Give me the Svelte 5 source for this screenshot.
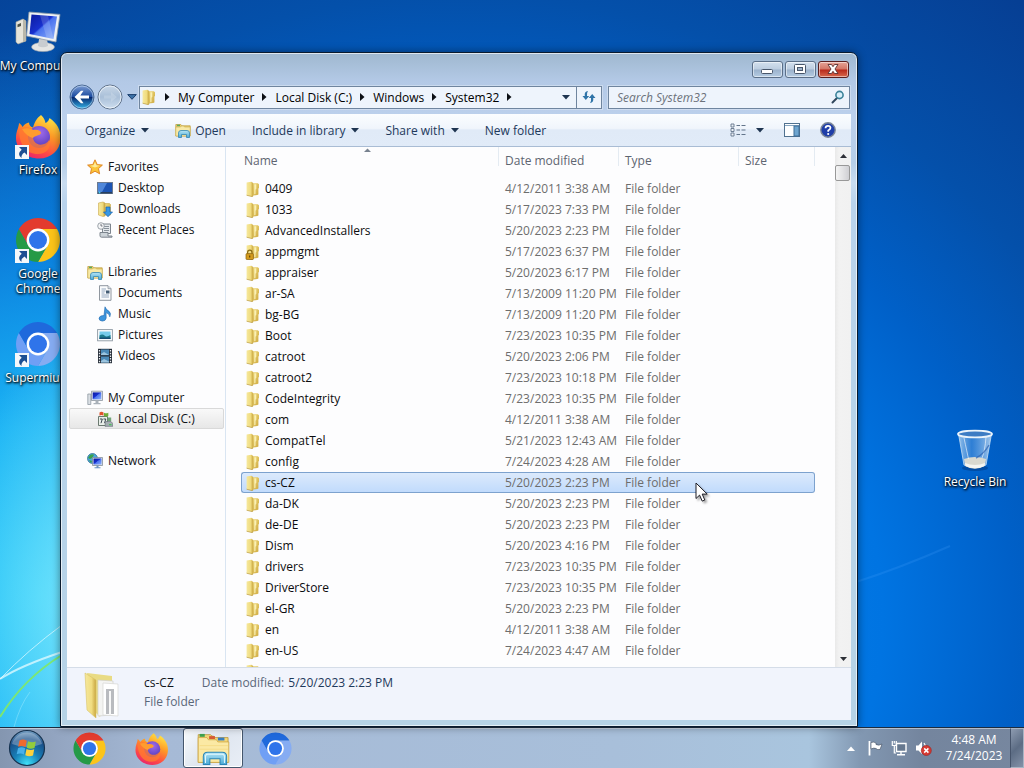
<script lang="ts">
  interface Entry {
    name: string;
    date: string;
    locked?: boolean;
  }

  const desktopItems = [
    { label: 'My Computer', icon: 'computer', shortcut: false },
    { label: 'Firefox', icon: 'firefox', shortcut: true },
    { label: 'Google Chrome', icon: 'chrome', shortcut: true },
    { label: 'Supermium', icon: 'supermium', shortcut: true },
  ];

  const crumbs = ['My Computer', 'Local Disk (C:)', 'Windows', 'System32'];

  const tree = [
    { label: 'Favorites', icon: 'star', children: [
      { label: 'Desktop', icon: 'desktop' },
      { label: 'Downloads', icon: 'downloads' },
      { label: 'Recent Places', icon: 'recent' },
    ] },
    { label: 'Libraries', icon: 'library', children: [
      { label: 'Documents', icon: 'document' },
      { label: 'Music', icon: 'music' },
      { label: 'Pictures', icon: 'picture' },
      { label: 'Videos', icon: 'video' },
    ] },
    { label: 'My Computer', icon: 'pc', children: [
      { label: 'Local Disk (C:)', icon: 'disk' },
    ] },
    { label: 'Network', icon: 'network', children: [] },
  ];

  const entries: Entry[] = [
    { name: '0409', date: '4/12/2011 3:38 AM' },
    { name: '1033', date: '5/17/2023 7:33 PM' },
    { name: 'AdvancedInstallers', date: '5/20/2023 2:23 PM' },
    { name: 'appmgmt', date: '5/17/2023 6:37 PM', locked: true },
    { name: 'appraiser', date: '5/20/2023 6:17 PM' },
    { name: 'ar-SA', date: '7/13/2009 11:20 PM' },
    { name: 'bg-BG', date: '7/13/2009 11:20 PM' },
    { name: 'Boot', date: '7/23/2023 10:35 PM' },
    { name: 'catroot', date: '5/20/2023 2:06 PM' },
    { name: 'catroot2', date: '7/23/2023 10:18 PM' },
    { name: 'CodeIntegrity', date: '7/23/2023 10:35 PM' },
    { name: 'com', date: '4/12/2011 3:38 AM' },
    { name: 'CompatTel', date: '5/21/2023 12:43 AM' },
    { name: 'config', date: '7/24/2023 4:28 AM' },
    { name: 'cs-CZ', date: '5/20/2023 2:23 PM' },
    { name: 'da-DK', date: '5/20/2023 2:23 PM' },
    { name: 'de-DE', date: '5/20/2023 2:23 PM' },
    { name: 'Dism', date: '5/20/2023 4:16 PM' },
    { name: 'drivers', date: '7/23/2023 10:35 PM' },
    { name: 'DriverStore', date: '7/23/2023 10:35 PM' },
    { name: 'el-GR', date: '5/20/2023 2:23 PM' },
    { name: 'en', date: '4/12/2011 3:38 AM' },
    { name: 'en-US', date: '7/24/2023 4:47 AM' },
  ];

  let selectedName = $state('cs-CZ');
  let activePlace = $state('Local Disk (C:)');
  let query = $state('');

  const selected = $derived(entries.find(e => e.name === selectedName) ?? entries[0]);
</script>

<!-- gradients shared by the icons -->
<svg class="defs" width="0" height="0" aria-hidden="true">
  <defs>
    <linearGradient id="gFold" x1="0" x2="1" y1="0" y2="0">
      <stop offset="0" stop-color="#f6e89c" /><stop offset=".6" stop-color="#f0dc80" /><stop offset="1" stop-color="#c9a640" />
    </linearGradient>
    <linearGradient id="gFoldR" x1="0" x2="1" y1="0" y2="1">
      <stop offset="0" stop-color="#f0db7c" /><stop offset="1" stop-color="#cda840" />
    </linearGradient>
    <linearGradient id="gGlass" x1="0" x2="0" y1="0" y2="1">
      <stop offset="0" stop-color="#b5e6f6" /><stop offset="1" stop-color="#4aa9d6" />
    </linearGradient>
    <linearGradient id="gScreen" x1="0" x2="1" y1="0" y2="1">
      <stop offset="0" stop-color="#0b1a9c" /><stop offset=".45" stop-color="#1830cf" /><stop offset=".5" stop-color="#4a72ee" /><stop offset="1" stop-color="#8fb2fb" />
    </linearGradient>
    <linearGradient id="gNav" x1="0" x2="0" y1="0" y2="1">
      <stop offset="0" stop-color="#7f9fd4" /><stop offset=".48" stop-color="#1d4ca0" /><stop offset=".52" stop-color="#06286f" /><stop offset="1" stop-color="#35b6ea" />
    </linearGradient>
    <linearGradient id="gNavOff" x1="0" x2="0" y1="0" y2="1">
      <stop offset="0" stop-color="#c9d8e8" /><stop offset=".5" stop-color="#a9bfd8" /><stop offset="1" stop-color="#cfdff0" />
    </linearGradient>
    <linearGradient id="gFire" x1=".8" x2=".3" y1="0" y2="1">
      <stop offset="0" stop-color="#fff04a" /><stop offset=".4" stop-color="#ff9a26" /><stop offset=".75" stop-color="#ff4a45" /><stop offset="1" stop-color="#e8246c" />
    </linearGradient>
    <radialGradient id="gGlobe" cx=".55" cy=".3" r=".8">
      <stop offset="0" stop-color="#a06bea" /><stop offset="1" stop-color="#4a35b4" />
    </radialGradient>
    <radialGradient id="gOrb" cx=".5" cy=".95" r=".95">
      <stop offset="0" stop-color="#3fe0f8" /><stop offset=".4" stop-color="#1780b8" /><stop offset=".75" stop-color="#19508a" /><stop offset="1" stop-color="#7ba4c6" />
    </radialGradient>
    <linearGradient id="gBin" x1="0" x2="1" y1="0" y2="0">
      <stop offset="0" stop-color="#bcd9f2" stop-opacity=".8" /><stop offset=".4" stop-color="#5c9ce0" stop-opacity=".5" /><stop offset="1" stop-color="#d8e9f8" stop-opacity=".75" />
    </linearGradient>
  </defs>
</svg>

{#snippet folder(locked: boolean)}
  <svg class="i16" viewBox="0 0 16 16" aria-hidden="true">
    <path d="M7.500 2.300h5.300l1.200 1V7l-.6.5V13.400l-1.200.6-4.700.6z" fill="url(#gFoldR)" />
    <path d="M9.300 3.300h2v4.500l-.8 1v4l-1.200.5z" fill="#faf0b4" />
    <path d="M1.600 1.600 6.400.8l1.800 1.200V15L7 15.600 1.600 14.200z" fill="url(#gFold)" />
    <path d="M1.600 14.200 7 15.600l1.200-.6" fill="none" stroke="#b8963a" stroke-width=".7" />
    {#if locked}
      <path d="M2.600 10V8.400a2.200 2.200 0 0 1 4.400 0V10" fill="none" stroke="#8a6a12" stroke-width="1.200" />
      <rect x="1" y="9.600" width="7.400" height="5.900" rx=".8" fill="#d39a1c" stroke="#8a6212" stroke-width=".7" />
      <path d="M4.700 11.400v2.200" stroke="#5e4208" stroke-width="1.200" />
    {/if}
  </svg>
{/snippet}

{#snippet browserWheel(a: string, b: string, c: string)}
  <path d="M4.950 13A22 22 0 0 1 43.050 13H24A11 11 0 0 0 14.470 29.500Z" fill={c} transform="rotate(120 24 24)" />
  <path d="M4.950 13A22 22 0 0 1 43.050 13H24A11 11 0 0 0 14.470 29.500Z" fill={b} transform="rotate(240 24 24)" />
  <path d="M4.950 13A22 22 0 0 1 43.050 13H24A11 11 0 0 0 14.470 29.500Z" fill={a} />
  <circle cx="24" cy="24" r="11.400" fill="#fff" />
  <circle cx="24" cy="24" r="9" fill="#2f74ea" />
{/snippet}

{#snippet bigIcon(name: string)}
  <svg class="big" viewBox="0 0 48 48" aria-hidden="true">
    {#if name === 'computer'}
      <path d="M2 14 9 11l3 2v20l-8 3-2-2z" fill="#e6e4da" stroke="#aaa89c" stroke-width=".6" />
      <path d="m9 11 3 2v20l-3 1z" fill="#b9b7aa" />
      <path d="M3.500 16.500 7 15v3l-3.500 1.300z" fill="#4d5247" />
      <ellipse cx="29" cy="39" rx="11.500" ry="4.600" fill="#e4e5e4" stroke="#9fa5ab" stroke-width=".6" />
      <path d="M25 31h8l1 7q-5 2.500-10 0z" fill="#c8ccd0" />
      <path d="m15 4 31 2.400L42 34 12.500 28z" fill="#eef1f4" stroke="#8f9aa6" stroke-width=".8" />
      <path d="m17.500 6.500 25.500 2L39.500 31 15.500 26z" fill="url(#gScreen)" />
      <path d="m26 7.200 8 .6L39.500 31l-7-1.400z" fill="#fff" opacity=".16" />
    {:else if name === 'firefox'}
      <path d="M27 3c3 3 4 5 4.500 8 3-1 4-5 4-5C43 11 47 18 46.500 27 46 38.500 37 46.500 25 46.500S2 38 2 26c0-7 3-11 3-15 2 1 3 3 3.500 4 2-3 4.500-4 6.500-4.500 0 3 2 4.500 4 5C21 9 23 6 27 3z" fill="url(#gFire)" />
      <circle cx="25" cy="25" r="11" fill="url(#gGlobe)" />
      <path d="M5 18c5-4 11-3 14 0 1 5-1 7 1 11 4 6 12 4 15-1 3 8-3 14-11 14C12 42 5 32 5 18z" fill="#ff7a30" opacity=".8" />
      <path d="M19 18c5-1 8 1 8 3-1 3-6 2-8 5-4-1-8-4-11-9 4-1 8-1 11 1z" fill="#ff9c2e" />
    {:else if name === 'chrome'}
      {@render browserWheel('#e33b2e', '#259a47', '#fcc419')}
    {:else if name === 'supermium'}
      {@render browserWheel('#1f69dc', '#6f9ff5', '#86acf2')}
    {:else if name === 'bin'}
      <ellipse cx="24" cy="44" rx="13" ry="3" fill="#02245c" opacity=".35" />
      <path d="M7.500 10 13 41q10 5 22 0l5.500-31z" fill="url(#gBin)" stroke="#c3ddf5" stroke-width=".8" />
      <path d="M13 35q11 -4 22 0l-1.400 7q-10 5.500-19.400 0z" fill="#d9d9d0" />
      <path d="M14 39q10 4 20 0l-.5 3q-9 4.500-19 0z" fill="#f4f5f2" />
      <path d="M13 14q3 14 4.500 21M35 13q-1 14-4 21" stroke="#fff" stroke-width="1" opacity=".6" fill="none" />
      <path d="M25 34q8-4 13-13" stroke="#2d63b2" stroke-width="1.500" fill="none" opacity=".7" />
      <ellipse cx="24" cy="10" rx="17" ry="3.400" fill="#3d7cc4" stroke="#eaf3fb" stroke-width="1.800" />
    {:else if name === 'explorer'}
      <path d="M3 5h17l2 2h2l1 2h19v34H3z" fill="#f3d778" stroke="#b98f2c" />
      <path d="M5 4h7v4H5z" fill="#3ea24e" /><path d="M18 7h8v4h-8z" fill="#d65a35" /><path d="M30 9h9v4h-9z" fill="#3a7fc0" />
      <path d="M3 9h12l2 3h11l2 3h15v28H3z" fill="#fbe9a4" stroke="#caa13d" />
      <path d="M5 20h39M5 25h39" stroke="#f3d880" stroke-width="1" />
      <path d="M10 46V35q0-6 6-6h20q6 0 6 6v11h-9v-8H19v8z" fill="url(#gGlass)" stroke="#2a86b8" stroke-width="1.400" />
      <path d="M13 44v-9q0-3 3-3h20q3 0 3 3v9" fill="none" stroke="#e0f7fd" stroke-width="1.400" />
    {:else if name === 'openFolder'}
      <path d="M8 2 33 5v6l-12 35-6-6z" fill="#e9db84" />
      <path d="m19 9 15 1v34l-15 1z" fill="#f4f4f2" stroke="#cfcfca" stroke-width=".7" />
      <path d="m24 12 15 1v32l-15-1z" fill="#fff" stroke="#d5d5d2" stroke-width=".7" />
      <path d="M27 18h8v25h-8z" fill="#b9bbbf" /><path d="M30 20h2v24h-2z" fill="#f8f8f8" />
      <path d="M6 2 17 9v38L8 39z" fill="url(#gFold)" stroke="#d8c266" stroke-width=".6" />
    {/if}
  </svg>
{/snippet}

{#snippet smallIcon(name: string)}
  <svg class="i16" viewBox="0 0 16 16" aria-hidden="true">
    {#if name === 'star'}
      <path d="m8 .8 2.200 4.800 5.200.5-3.900 3.500 1.100 5.200L8 12.200l-4.600 2.600 1.100-5.200L.6 6.100l5.200-.5z" fill="#fbc53a" stroke="#dd7e1c" stroke-width=".9" />
      <path d="m8 3 1.400 3.300 3.400.4L8 8.500 3.200 6.700l3.400-.4z" fill="#fdeb9a" />
    {:else if name === 'desktop'}
      <rect x=".5" y="2.500" width="15" height="11" fill="#1c54b4" stroke="#6b7a90" />
      <path d="M1 3h9L5 12H1z" fill="#5c93e4" opacity=".8" /><path d="M1 12h14v1.500H1z" fill="#29405f" /><circle cx="2.500" cy="12.500" r="1" fill="#4bd0f0" />
    {:else if name === 'downloads'}
      <path d="M1.500 2 6 1l2 1v13l-2 .5L1.500 14z" fill="url(#gFold)" stroke="#c9a84a" stroke-width=".6" />
      <path d="M8 2.500h4.500l1 1V14H8z" fill="url(#gFoldR)" stroke="#c9a84a" stroke-width=".6" />
      <path d="M9 6h4v5h2.500l-4.500 4.700L6.500 11H9z" fill="#3797e4" stroke="#1762b0" stroke-width=".7" />
    {:else if name === 'recent'}
      <path d="M5.500 2h8v9.500h-8z" fill="#e4e8ec" stroke="#7d858e" stroke-width="1" />
      <path d="M7 4.500h5M7 6.500h5M7 8.500h5" stroke="#8a939c" stroke-width="1" />
      <path d="M3 10.500h8v3.500h4v1.200H4.500q-1.500 0-1.500-1.500z" fill="#ccd3d8" stroke="#7d858e" stroke-width="1" />
      <circle cx="4" cy="4" r="3.300" fill="#f5f6f7" stroke="#868e97" stroke-width=".8" /><path d="M4 2v2h1.500" stroke="#555c64" fill="none" stroke-width=".8" />
    {:else if name === 'library' || name === 'open'}
      <path d="M.8 2.500h5l1 1.300h8.400V14H.8z" fill="#ecd06c" stroke="#bb9a3c" stroke-width=".7" />
      <path d="M2 2.700h3v1.500H2z" fill="#58a961" />
      <path d="M.8 5h4.700l1-1h2l1 1h5.700v9H.8z" fill="#f8e9a6" stroke="#caae52" stroke-width=".6" />
      <path d="M3.500 15.500V11q0-2.500 2.500-2.500h6q2.500 0 2.500 2.500v4.500H11.500v-3h-5v3z" fill="url(#gGlass)" stroke="#3487b3" stroke-width=".8" />
    {:else if name === 'document'}
      <path d="M2.500.7h8.500l3 3v11.600H2.500z" fill="#fbfcfd" stroke="#838b94" stroke-width=".9" />
      <path d="M11 .7v3h3" fill="#dde3e9" stroke="#838b94" stroke-width=".7" />
      <path d="M4.500 4h4.500M4.500 6h4M4.500 8h3M4.500 10h7.500M4.500 12h7.500" stroke="#7d96b0" stroke-width=".8" />
      <path d="M9 5.500h3.500v3H9z" fill="#435c74" />
    {:else if name === 'music'}
      <path d="M8 .8q1 3 4 4.500 2.500 2 .8 5.500 0-3-3.800-4.200l.2 5.500q-.5 3-3.900 3-3.500-.3-3.300-3 .8-2.900 5-2.600z" fill="#3d95dd" stroke="#1d66ae" stroke-width=".6" />
    {:else if name === 'picture'}
      <rect x=".6" y="2.600" width="14.800" height="11.200" fill="#f8fafb" stroke="#8d98a3" stroke-width=".9" />
      <path d="M2.500 4.500h11v7.500h-11z" fill="#76cbea" /><path d="M2.500 8.500q3-2 5 0t6-.5v4h-11z" fill="#1d7a8c" /><path d="M2.500 10.500h11V12h-11z" fill="#164d73" />
    {:else if name === 'video'}
      <path d="M1 .8h14v14.400H1z" fill="#232b36" />
      <path d="M4 1.500h8v5.800H4zM4 8.500h8v6H4z" fill="#4a8ab8" /><path d="m4 6 3-2 5 3H4zM4 13l3-2 5 2.500V14.500H4z" fill="#9cc5df" />
      <path d="M2.500 2v13M13.500 2v13" stroke="#e7ecf1" stroke-width="1.300" stroke-dasharray="1.500 1.200" />
    {:else if name === 'pc'}
      <path d="M.8 4h3v10.500h-3z" fill="#dadfe4" stroke="#858f99" stroke-width=".7" />
      <path d="M4.500 1.200h11V10.500h-11z" fill="#e4e8ec" stroke="#7e8893" stroke-width=".7" /><path d="M5.700 2.400h8.600v6.900H5.700z" fill="url(#gScreen)" />
      <path d="M8.500 10.500h3V13h2v1.200h-7V13h2z" fill="#a9b1b9" />
    {:else if name === 'disk'}
      <path d="M1.500 5.500h9V14.500h-9z" fill="#e9efe9" stroke="#5c6c62" stroke-width=".9" />
      <path d="M3 8h2.300L4 12.200M6.500 8h2.300l-1.300 4.200" fill="none" stroke="#3c4650" stroke-width="1" />
      <path d="M8.500 10.500H14l1.800 2v2.800H8z" fill="#a4adb1" stroke="#68737a" stroke-width=".7" /><path d="M12 13h2.500v1.200H12z" fill="#4bc35a" />
      <path d="M2.500 1.500q2-1.300 4 0v3.200q-2-1.200-4 0z" fill="#e0532c" /><path d="M7 1.700q2 1.300 4.300 0v3.200q-2.300 1.300-4.300 0z" fill="#6fae37" />
      <path d="M10.800 6.500h3.400v3.500h-3.400z" fill="#6fa577" />
    {:else if name === 'network'}
      <circle cx="5.500" cy="5.500" r="5" fill="#4aa6dc" stroke="#24668e" stroke-width=".7" /><path d="M3 2q3-1.500 4 0L5 5 3 6 1 5zM2 7l3 1-1 2.300z" fill="#3aa14c" />
      <path d="M5.500 4.500h10v8h-10z" fill="#dfe5ea" stroke="#77828d" stroke-width=".7" /><path d="M6.500 5.500h8v6h-8z" fill="url(#gScreen)" />
      <path d="M9.500 12.500h2v1.700h2v1.100h-6v-1.100h2z" fill="#6e95c2" />
    {/if}
  </svg>
{/snippet}

<div class="screen">
  <main class="desktop">
    <svg class="wallpaper" viewBox="0 0 1024 727" preserveAspectRatio="none" aria-hidden="true">
      <path d="M0 679Q20 666 62 652" stroke="#e6fbff" stroke-width="2" fill="none" opacity=".75" />
      <path d="M0 679Q28 650 62 625" stroke="#e6fbff" stroke-width="1" fill="none" opacity=".7" />
      <path d="M0 717Q24 678 62 655" stroke="#7fe86c" stroke-width="2" fill="none" opacity=".95" />
      <path d="M14 727Q20 705 30 692" stroke="#aef0ff" stroke-width="1" fill="none" opacity=".4" />
      <path d="M856 582Q900 568 950 546" stroke="#4aa4ff" stroke-width="2" fill="none" opacity=".2" />
    </svg>

    <div class="shortcuts">
      {#each desktopItems as item}
        <button class="shortcut">
          <span class="art">
            {@render bigIcon(item.icon)}
            {#if item.shortcut}
              <svg class="arrow" viewBox="0 0 14 14" aria-hidden="true">
                <rect width="14" height="14" fill="#f4f7fa" />
                <path d="M4 2h8v8L9.500 7.500Q6 9.500 6.500 13 1.500 9 6.700 4.700z" fill="#1d4f93" />
              </svg>
            {/if}
          </span>
          <span class="caption" class:nowrap={!item.shortcut}>{item.label}</span>
        </button>
      {/each}
    </div>
    <button class="shortcut bin">
      <span class="art">{@render bigIcon('bin')}</span>
      <span class="caption">Recycle Bin</span>
    </button>

    <section class="window" aria-label="System32">
      <div class="titlebar">
        <button class="ctl" aria-label="Minimize">
          <svg width="30" height="16" viewBox="0 0 30 16"><rect x="9.500" y="8.500" width="11" height="4" rx="1" fill="#fff" stroke="#48566a" /></svg>
        </button>
        <button class="ctl" aria-label="Maximize">
          <svg width="30" height="16" viewBox="0 0 30 16"><rect x="9.500" y="3.500" width="11" height="9" rx="1" fill="#fff" stroke="#48566a" /><rect x="12.500" y="6.500" width="5" height="3" fill="#9db2ca" stroke="#48566a" /></svg>
        </button>
        <button class="ctl close" aria-label="Close">
          <svg width="30" height="16" viewBox="0 0 30 16"><path d="M10 3.500h3.500L15 5.700l1.500-2.200H20L17 8l3 4.500h-3.500L15 10.300l-1.500 2.200H10L13 8z" fill="#fff" stroke="#5b3030" stroke-width=".9" /></svg>
        </button>
      </div>

      <div class="navrow">
        <button class="round" aria-label="Back">
          <svg width="26" height="26" viewBox="0 0 26 26">
            <circle cx="13" cy="13" r="12" fill="url(#gNav)" stroke="#4b6a94" />
            <circle cx="13" cy="13" r="11" fill="none" stroke="#cfe2f6" stroke-width=".7" opacity=".8" />
            <path d="M5.500 13 12 6.800h2.500L11.300 11.500H20v3h-8.700l3.200 4.700H12z" fill="#fff" />
          </svg>
        </button>
        <button class="round" aria-label="Forward">
          <svg width="26" height="26" viewBox="0 0 26 26">
            <circle cx="13" cy="13" r="12" fill="url(#gNavOff)" stroke="#60728a" />
            <circle cx="13" cy="13" r="11" fill="none" stroke="#f1f6fb" stroke-width=".8" />
            <path d="M20 13l-6-5v3.500H7v3h7V18z" fill="#dde7f2" opacity=".3" />
          </svg>
        </button>
        <button class="history" aria-label="Recent pages">
          <svg width="10" height="6" viewBox="0 0 10 6"><path d="M.7.600h8.600L5 5.300z" fill="#3d72a8" stroke="#1c3f6e" /></svg>
        </button>
        <nav class="address" aria-label="Address">
          {@render folder(false)}
          {#each crumbs as crumb}
            <svg class="sep" viewBox="0 0 5 8" aria-hidden="true"><path d="M0 0v8l4.500-4z" /></svg>
            <button class="crumb">{crumb}</button>
          {/each}
          <svg class="sep" viewBox="0 0 5 8" aria-hidden="true"><path d="M0 0v8l4.500-4z" /></svg>
          <button class="drop" aria-label="Previous locations"><svg class="caret" viewBox="0 0 8 5"><path d="M0 0h8L4 4.500z" /></svg></button>
          <button class="refresh" aria-label="Refresh">
            <svg width="16" height="16" viewBox="0 0 16 16"><path d="M7 2Q3 2.500 3.800 7H1.500l3.300 4L8.200 7H6Q5.500 4 7 2zM9 14q4-.5 3.200-5h2.300L11.200 5 7.800 9H10q.5 3-1 5z" fill="#2f74a8" /></svg>
          </button>
        </nav>
        <label class="search">
          <input type="text" placeholder="Search System32" aria-label="Search System32" bind:value={query} />
          <svg width="14" height="14" viewBox="0 0 14 14" aria-hidden="true"><path d="M6 8 1.500 12.500" stroke="#31465c" stroke-width="2" stroke-linecap="round" /><circle cx="8.500" cy="5" r="3.600" fill="#d8effa" stroke="#3b8299" stroke-width="1.600" /></svg>
        </label>
      </div>

      <div class="client">
        <div class="commands">
          <button>Organize <svg class="caret" viewBox="0 0 8 5"><path d="M0 0h8L4 4.500z" /></svg></button>
          <button class="open">{@render smallIcon('open')} Open</button>
          <button>Include in library <svg class="caret" viewBox="0 0 8 5"><path d="M0 0h8L4 4.500z" /></svg></button>
          <button>Share with <svg class="caret" viewBox="0 0 8 5"><path d="M0 0h8L4 4.500z" /></svg></button>
          <button>New folder</button>
          <span class="tools">
            <button class="views" aria-label="Change your view">
              <svg width="16" height="14" viewBox="0 0 16 14"><path d="M1 1h3v3H1zM1 5.500h3v3H1zM1 10h3v3H1z" fill="#eef3f8" stroke="#62748a" stroke-width=".9" /><path d="M6.500 2.500H10M11.500 2.500h4M6.500 7H10M11.500 7h4M6.500 11.500H10M11.500 11.500h4" stroke="#62748a" stroke-width="1.200" /></svg>
              <svg class="caret" viewBox="0 0 8 5"><path d="M0 0h8L4 4.500z" /></svg>
            </button>
            <button aria-label="Show the preview pane">
              <svg width="16" height="14" viewBox="0 0 16 14"><rect x=".5" y=".5" width="15" height="13" fill="#fdfeff" stroke="#50718f" /><path d="M1 2.500h14" stroke="#86a5c0" /><rect x="10" y="3" width="5" height="10" fill="#6ea5cf" stroke="#3f6e98" /></svg>
            </button>
            <button aria-label="Get help">
              <svg width="16" height="16" viewBox="0 0 16 16"><circle cx="8" cy="8" r="7.200" fill="#1f3ea8" stroke="#7c8797" stroke-width="1.400" /><path d="M5.500 6.200Q5.600 3.800 8 3.800t2.500 2.100Q10.400 7.300 8.200 8.500V9.800" fill="none" stroke="#fff" stroke-width="1.700" /><circle cx="8.200" cy="12" r="1.100" fill="#fff" /></svg>
            </button>
          </span>
        </div>

        <div class="panes">
          <nav class="tree" aria-label="Places">
            {#each tree as group}
              <div class="group">
                <a class="place" href="#top" onclick={() => (activePlace = group.label)}>
                  {@render smallIcon(group.icon)}{group.label}
                </a>
                {#each group.children as child}
                  <a class="place child" class:active={activePlace === child.label} href="#top" onclick={() => (activePlace = child.label)}>
                    {@render smallIcon(child.icon)}{child.label}
                  </a>
                {/each}
              </div>
            {/each}
          </nav>

          <div class="files">
            <table>
              <colgroup>
                <col class="c-name" /><col class="c-date" /><col class="c-type" /><col class="c-size" />
              </colgroup>
              <thead>
                <tr>
                  <th aria-sort="ascending">Name<svg class="sort" viewBox="0 0 7 4" aria-hidden="true"><path d="M0 4h7L3.500.500z" /></svg></th>
                  <th>Date modified</th>
                  <th>Type</th>
                  <th>Size</th>
                </tr>
              </thead>
              <tbody>
                {#each entries as entry}
                  <tr class:selected={entry.name === selectedName} onclick={() => (selectedName = entry.name)}>
                    <td><span class="file">{@render folder(!!entry.locked)}{entry.name}</span></td>
                    <td>{entry.date}</td>
                    <td>File folder</td>
                    <td></td>
                  </tr>
                {/each}
                <tr aria-hidden="true">
                  <td><span class="file">{@render folder(false)}</span></td>
                  <td colspan="3"></td>
                </tr>
              </tbody>
            </table>
          </div>

          <div class="scrollbar">
            <button aria-label="Scroll up"><svg width="7" height="4" viewBox="0 0 7 4"><path d="M0 4h7L3.500 0z" fill="#2c2f36" /></svg></button>
            <div class="thumb"></div>
            <button class="down" aria-label="Scroll down"><svg width="7" height="4" viewBox="0 0 7 4"><path d="M0 0h7L3.500 4z" fill="#2c2f36" /></svg></button>
          </div>
        </div>

        <footer class="details">
          <span class="preview">{@render bigIcon('openFolder')}</span>
          <div class="facts">
            <p><span class="title">{selected.name}</span><span>Date modified:</span><span class="value">{selected.date}</span></p>
            <p>File folder</p>
          </div>
        </footer>
      </div>
    </section>

    <svg class="cursor" width="14" height="21" viewBox="0 0 14 21" aria-hidden="true">
      <path d="M1 1v15.500l3.600-3.400 2.600 6 2.600-1.100-2.600-5.900h5z" fill="#fff" stroke="#1c1c24" />
    </svg>
  </main>

  <footer class="taskbar">
    <button class="start" aria-label="Start">
      <svg width="38" height="38" viewBox="0 0 38 38">
        <circle cx="19" cy="19" r="17.500" fill="url(#gOrb)" stroke="#15324f" stroke-width="1.200" />
        <path d="M4 15a15.500 15.500 0 0 1 30 0q-15 6-30 0z" fill="#fff" opacity=".28" />
        <path d="M11.500 11.500q3.500-2 7.300.2L17.500 18q-3.500-2-7.300-.2z" fill="#f06a2e" />
        <path d="M20 12.200q4 2 7.800.3L26.500 19q-4 1.500-7.700-.3z" fill="#93cc3c" />
        <path d="M10 19.200q3.500-2 7.200 0L15.900 25.500q-3.500-2-7.200-.2z" fill="#47b0ea" />
        <path d="M18.500 20q4 2 7.700.3L25 26.500q-4 1.700-7.700-.3z" fill="#fbd13d" />
      </svg>
    </button>
    <button class="task" aria-label="Google Chrome">{@render bigIcon('chrome')}</button>
    <button class="task" aria-label="Firefox">{@render bigIcon('firefox')}</button>
    <button class="task running" aria-label="Windows Explorer">{@render bigIcon('explorer')}</button>
    <button class="task" aria-label="Supermium">{@render bigIcon('supermium')}</button>

    <div class="tray">
      <button aria-label="Show hidden icons"><svg width="8" height="5" viewBox="0 0 8 5"><path d="M0 5h8L4 .500z" fill="#fff" /></svg></button>
      <button aria-label="Action Center">
        <svg width="16" height="16" viewBox="0 0 16 16"><path d="M2.500 1v14.500" stroke="#fff" stroke-width="1.800" /><path d="M4 2.500q3-1 5 .5v1.500q3 1.500 6-.5l-2 5.500q-3 .5-4-1-2-1-5 .5z" fill="#fff" stroke="#3f4c5e" stroke-width=".6" /></svg>
      </button>
      <button aria-label="Network">
        <svg width="16" height="16" viewBox="0 0 16 16"><path d="M5.500 3.500h9.500v8H5.500z" fill="#66788f" stroke="#fff" stroke-width="1.400" /><path d="M10 12v2M6 14.700h8" stroke="#fff" stroke-width="1.400" /><path d="M1.300 1v4.500h4V1M3.300 1v2.500M3.300 5.500V13H5" stroke="#fff" fill="none" stroke-width="1.200" /></svg>
      </button>
      <button aria-label="Volume, muted">
        <svg width="17" height="16" viewBox="0 0 17 16"><path d="M1 5.500h2.500L7 1.500v12.500L3.500 10.500H1z" fill="#fff" /><path d="M9 3q3 4 0 9" stroke="#fff" fill="none" stroke-width="1.200" /><circle cx="11.300" cy="10.500" r="5" fill="#d73a33" stroke="#9e1e1a" stroke-width=".6" /><path d="m9.200 8.400 4.200 4.200m0-4.200-4.200 4.200" stroke="#fff" stroke-width="1.500" /></svg>
      </button>
      <time class="clock" datetime="2023-07-24T04:48">4:48 AM<br />7/24/2023</time>
    </div>
    <button class="peek" aria-label="Show desktop"></button>
  </footer>
</div>

<style>
  :global(body) {
    margin: 0;
    font-family: 'Open Sans', 'Noto Sans', sans-serif;
    font-size: 12px;
  }
  button, input {
    font: inherit;
    color: inherit;
    margin: 0;
    padding: 0;
    border: 0;
    background: none;
  }
  svg { display: block; flex: none; }
  .defs { position: absolute; }
  .i16 { width: 16px; height: 16px; }
  .big { width: 48px; height: 48px; }
  .caret { width: 8px; height: 5px; fill: #1e3450; }
  .sep { width: 5px; height: 8px; fill: #0c0f14; }

  .screen {
    display: flex;
    flex-direction: column;
    height: 100vh;
    overflow: hidden;
  }
  .desktop {
    position: relative;
    flex: 1;
    min-height: 0;
    background:
      radial-gradient(ellipse 12% 40% at 8% 84%, rgba(150, 240, 255, 0.7), rgba(60, 210, 250, 0) 100%),
      radial-gradient(ellipse 45% 78% at 4% 82%, #2ccbf8 0, rgba(28, 184, 246, 0.95) 30%, rgba(18, 150, 240, 0.6) 62%, rgba(8, 100, 220, 0) 100%),
      radial-gradient(ellipse 75% 95% at 45% 85%, #0c90ee 0, #0074e2 55%, #0060c8 72%, #0450aa 90%, #063f94 115%);
  }
  .wallpaper {
    position: absolute;
    inset: 0;
    width: 100%;
    height: 100%;
  }
  .shortcuts {
    position: relative;
    display: flex;
    flex-direction: column;
    width: 76px;
  }
  .shortcut {
    display: flex;
    flex-direction: column;
    align-items: center;
    gap: 2px;
    width: 76px;
    height: 104px;
    padding-top: 8px;
    color: #fff;
    line-height: 15px;
    text-shadow: 1px 1px 2px #000, 0 1px 3px #000;
  }
  .bin {
    position: absolute;
    top: 416px;
    right: 11px;
  }
  .art { position: relative; }
  .arrow {
    position: absolute;
    left: 1px;
    bottom: 1px;
    width: 14px;
    height: 14px;
  }
  .nowrap { white-space: nowrap; }

  .window {
    position: absolute;
    inset: 52px 166px 0 60px;
    display: flex;
    flex-direction: column;
    box-sizing: border-box;
    padding: 1px 6px 6px;
    border: 1px solid #0a1b2e;
    border-radius: 7px 7px 0 0;
    background: linear-gradient(#9fb8cf 0, #b3c9e6 28px, #bcd0ec 64px, #b6cee8 110px, #c9dcf0 130px, #b9d3ec 150px, #b6d3e6 100%);
    box-shadow: inset 0 0 0 1px rgba(255, 255, 255, 0.65), 0 0 8px rgba(0, 0, 0, 0.45);
  }
  .titlebar {
    display: flex;
    justify-content: flex-end;
    gap: 2px;
    height: 19px;
    padding: 7px 2px 0;
  }
  .ctl {
    box-sizing: border-box;
    width: 31px;
    height: 17px;
    border: 1px solid #5b6f88;
    border-radius: 3px;
    background: linear-gradient(#d3e0ee 0, #bccde0 48%, #9bb2cc 52%, #b4cbe2 100%);
    box-shadow: inset 0 0 0 1px rgba(255, 255, 255, 0.5);
  }
  .ctl svg { margin: -1px 0 0 -1px; }
  .close {
    border-color: #5a1f1f;
    background: linear-gradient(#e6a497 0, #d37565 48%, #b8281a 52%, #d8694e 100%);
  }

  .navrow {
    display: flex;
    align-items: center;
    height: 34px;
    padding: 0 1px 0 2px;
  }
  .round { margin-right: 2px; }
  .history {
    width: 14px;
    padding: 0 2px;
  }
  .address, .search {
    display: flex;
    align-items: center;
    box-sizing: border-box;
    height: 23px;
    border: 1px solid #6f859f;
    background: #eef4fc;
    box-shadow: 0 0 0 1px rgba(255, 255, 255, 0.3);
  }
  .address {
    flex: 1;
    min-width: 0;
    gap: 8px;
    padding-left: 1px;
  }
  .crumb { white-space: nowrap; }
  .drop {
    margin-left: auto;
    padding: 8px 0;
  }
  .refresh {
    display: flex;
    align-items: center;
    align-self: stretch;
    padding: 0 4px;
    margin-left: -2px;
    border-left: 1px solid #6f859f;
  }
  .search {
    width: 242px;
    margin-left: 6px;
    padding: 0 4px 0 8px;
  }
  .search input {
    flex: 1;
    min-width: 0;
    outline: 0;
  }
  .search input::placeholder {
    color: #6c727b;
    font-style: italic;
    opacity: 1;
  }

  .client {
    display: flex;
    flex-direction: column;
    flex: 1;
    min-height: 0;
  }
  .commands {
    display: flex;
    align-items: center;
    gap: 26px;
    box-sizing: border-box;
    height: 33px;
    padding: 0 15px 0 18px;
    border-bottom: 1px solid #a9bcd4;
    background: linear-gradient(#fbfdff 0, #f0f5fc 45%, #e0eaf7 50%, #e1ebf8 100%);
    color: #1e395b;
  }
  .commands button {
    display: flex;
    align-items: center;
    gap: 6px;
    white-space: nowrap;
  }
  .commands .open { gap: 4px; }
  .tools {
    display: flex;
    align-items: center;
    gap: 20px;
    margin-left: auto;
  }
  .tools .views { gap: 10px; }

  .panes {
    display: flex;
    flex: 1;
    min-height: 0;
    background: #fdfdfe;
  }
  .tree {
    box-sizing: border-box;
    flex: none;
    width: 159px;
    padding: 9px 1px 0 2px;
    border-right: 1px solid #d9e5f2;
  }
  .group { margin-bottom: 21px; }
  .place {
    display: flex;
    align-items: center;
    gap: 5px;
    box-sizing: border-box;
    height: 21px;
    padding-left: 17px;
    border: 1px solid transparent;
    border-radius: 2px;
    color: #101318;
    text-decoration: none;
    white-space: nowrap;
  }
  .child { padding-left: 27px; }
  .active {
    border-color: #d9d9d9;
    background: linear-gradient(#f9f9f9, #e7e7e7);
  }

  .files {
    flex: 1;
    min-width: 0;
    overflow: hidden;
    padding-left: 15px;
  }
  table {
    table-layout: fixed;
    width: 574px;
    border-collapse: separate;
    border-spacing: 0;
  }
  .c-name { width: 257px; }
  .c-date, .c-type { width: 120px; }
  .c-size { width: 77px; }
  th {
    position: relative;
    height: 31px;
    padding: 0 0 5px 6px;
    box-sizing: border-box;
    border-left: 1px solid transparent;
    border-image: linear-gradient(#e4ebf2 60%, transparent 60%) 1;
    color: #5d6571;
    font-weight: 400;
    text-align: left;
  }
  th:first-child {
    padding-left: 3px;
    border: 0;
  }
  th:last-child { border-right: 1px solid transparent; }
  .sort {
    position: absolute;
    top: 1px;
    left: 48%;
    width: 7px;
    height: 4px;
    fill: #78828f;
  }
  td {
    box-sizing: border-box;
    height: 21px;
    padding: 0 0 0 7px;
    border: 0 solid #7da2ce;
    color: #6d6d6d;
    line-height: 16px;
    white-space: nowrap;
  }
  td:first-child {
    padding-left: 4px;
    color: #0c0c0e;
  }
  .file {
    display: flex;
    align-items: center;
    gap: 4px;
  }
  .selected td {
    border-width: 1px 0;
    background: linear-gradient(#dceafc, #c1dbfc);
  }
  .selected td:first-child {
    padding-left: 3px;
    border-left-width: 1px;
    border-radius: 3px 0 0 3px;
  }
  .selected td:last-child {
    border-right-width: 1px;
    border-radius: 0 3px 3px 0;
  }

  .scrollbar {
    display: flex;
    flex-direction: column;
    width: 16px;
    background: linear-gradient(to right, #e9e9e9, #f2f2f2 4px, #f1f1f1);
  }
  .scrollbar button {
    display: flex;
    align-items: center;
    justify-content: center;
    height: 17px;
  }
  .scrollbar .down { margin-top: auto; }
  .thumb {
    box-sizing: border-box;
    height: 16px;
    margin: 1px 1px 0 0;
    border: 1px solid #989898;
    border-radius: 2px;
    background: linear-gradient(to right, #f4f4f4, #e3e3e5 50%, #cfcfd3);
  }

  .details {
    display: flex;
    gap: 17px;
    box-sizing: border-box;
    height: 53px;
    padding: 3px 0 0 12px;
    border-top: 1px solid #d5dde8;
    background: #f1f4fc;
    color: #5a6779;
  }
  .facts p {
    display: flex;
    margin: 0;
    padding-top: 4px;
    line-height: 15px;
  }
  .title {
    margin-right: 28px;
    color: #10131a;
  }
  .value {
    margin-left: 4px;
    color: #1e395b;
  }

  .cursor {
    position: absolute;
    top: 482px;
    left: 695px;
    filter: drop-shadow(2px 2px 1px rgba(0, 0, 0, 0.35));
  }

  .taskbar {
    display: flex;
    align-items: center;
    gap: 2px;
    box-sizing: border-box;
    height: 41px;
    border-top: 1px solid #1c2c40;
    background: linear-gradient(to right, #8496b0 0, #94a6c2 6%, #a6bad6 16%, #a8bfda 60%, #a9c5de 79%, #8298b2 84%, #74859e 90%, #77879f 100%);
    box-shadow: inset 0 1px rgba(255, 255, 255, 0.45);
  }
  .start {
    width: 57px;
    padding-left: 8px;
  }
  .task {
    display: flex;
    align-items: center;
    justify-content: center;
    box-sizing: border-box;
    width: 60px;
    height: 40px;
  }
  .task .big { width: 35px; height: 35px; }
  .running {
    border: 1px solid #44566c;
    border-radius: 3px;
    background: linear-gradient(135deg, #f7fafc 0, #dfe6f0 50%, #e9eef6 100%);
    box-shadow: inset 0 0 0 1px #fff;
  }
  .tray {
    display: flex;
    align-items: center;
    gap: 8px;
    margin-left: auto;
    color: #fff;
  }
  .tray button:first-child { margin-right: 4px; }
  .clock {
    width: 68px;
    line-height: 16px;
    text-align: center;
  }
  .peek {
    box-sizing: border-box;
    align-self: stretch;
    width: 14px;
    border: 1px solid #a9b5c4;
    border-left-color: #45536a;
    background: linear-gradient(135deg, #8d9bb0 0, #5c6c84 50%, #8492a8 100%);
  }
</style>
